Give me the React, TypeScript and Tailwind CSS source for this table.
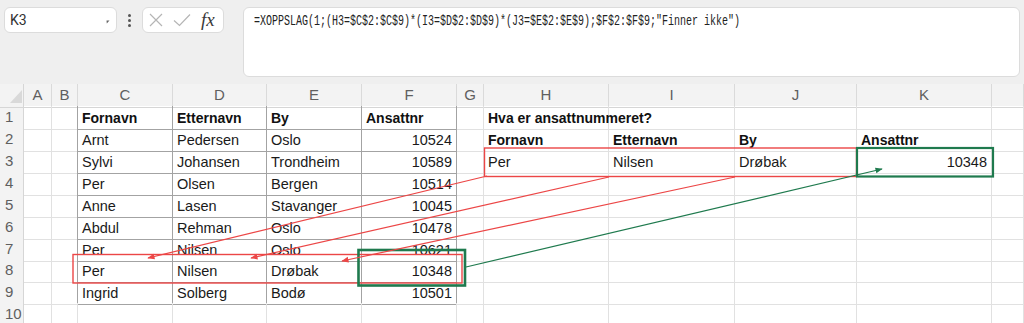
import React from "react";

type Cell = { t: string; b?: boolean; r?: boolean };

const COLS = ["A", "B", "C", "D", "E", "F", "G", "H", "I", "J", "K", ""];

// row data: index 0 = column A ... index 10 = column K
const ROWS: (Cell | null)[][] = [
  [null, null, { t: "Fornavn", b: true }, { t: "Etternavn", b: true }, { t: "By", b: true }, { t: "Ansattnr", b: true }, null, { t: "Hva er ansattnummeret?", b: true }],
  [null, null, { t: "Arnt" }, { t: "Pedersen" }, { t: "Oslo" }, { t: "10524", r: true }, null, { t: "Fornavn", b: true }, { t: "Etternavn", b: true }, { t: "By", b: true }, { t: "Ansattnr", b: true }],
  [null, null, { t: "Sylvi" }, { t: "Johansen" }, { t: "Trondheim" }, { t: "10589", r: true }, null, { t: "Per" }, { t: "Nilsen" }, { t: "Drøbak" }, { t: "10348", r: true }],
  [null, null, { t: "Per" }, { t: "Olsen" }, { t: "Bergen" }, { t: "10514", r: true }],
  [null, null, { t: "Anne" }, { t: "Lasen" }, { t: "Stavanger" }, { t: "10045", r: true }],
  [null, null, { t: "Abdul" }, { t: "Rehman" }, { t: "Oslo" }, { t: "10478", r: true }],
  [null, null, { t: "Per" }, { t: "Nilsen" }, { t: "Oslo" }, { t: "10621", r: true }],
  [null, null, { t: "Per" }, { t: "Nilsen" }, { t: "Drøbak" }, { t: "10348", r: true }],
  [null, null, { t: "Ingrid" }, { t: "Solberg" }, { t: "Bodø" }, { t: "10501", r: true }],
  [],
];

const ROW_H = ["h-[22px]", "h-[22px]", "h-[22px]", "h-[22px]", "h-[22px]", "h-[22px]", "h-[21px]", "h-[22px]", "h-[22px]", "h-[22px]"];

const GRID = "grid grid-cols-[24px_28px_26px_95px_94px_95px_95px_27px_125px_126px_122px_135px_1fr]";

const inTable = (row: number, col: number) => row >= 1 && row <= 9 && col >= 2 && col <= 5;

function DataCell({ cell, row, col }: { cell: Cell | null; row: number; col: number }) {
  const rightDark = row >= 1 && row <= 9 && col >= 1 && col <= 5;
  const bottomDark = inTable(row, col);
  return (
    <div
      className={[
        "relative flex items-end border-r border-b pb-[3px] whitespace-nowrap",
        rightDark ? "border-r-[#a3a3a3]" : "border-r-[#e1e1e1]",
        bottomDark ? "border-b-[#a3a3a3]" : "border-b-[#e1e1e1]",
        cell?.r ? "justify-end pr-[4px]" : "pl-[4px]",
      ].join(" ")}
    >
      {cell && (
        <span
          className={
            cell.b
              ? "font-bold text-[14px] leading-[16px] text-[#111]"
              : "text-[14.5px] leading-[16px] text-[#1a1a1a]"
          }
        >
          {cell.t}
        </span>
      )}
    </div>
  );
}

function FormulaBar() {
  return (
    <div className="h-[84px] bg-[#efefef] relative flex items-start pt-[7px] pl-[4px] gap-0">
      <div className="w-[113px] h-[26px] bg-white border border-[#dcdcdc] rounded-[6px] flex items-center pl-[5px] relative">
        <span className="text-[14px] text-[#333] font-['Roboto',sans-serif]">K3</span>
        <svg className="absolute right-[6px] top-[12px]" width="4" height="4" viewBox="0 0 4 4">
          <path d="M0.5 0.5 L3.5 0.5 L0.8 3.5 Z" fill="#666" />
        </svg>
      </div>
      <div className="w-[25px] h-[26px] flex flex-col items-center justify-center gap-[2px]">
        <span className="w-[3px] h-[3px] rounded-full bg-[#555]" />
        <span className="w-[3px] h-[3px] rounded-full bg-[#555]" />
        <span className="w-[3px] h-[3px] rounded-full bg-[#555]" />
      </div>
      <div className="w-[82px] h-[26px] bg-white border border-[#dcdcdc] rounded-[6px] flex items-center pl-[6px] gap-[10px]">
        <svg width="14" height="14" viewBox="0 0 14 14">
          <path d="M1 1 L13 13 M13 1 L1 13" stroke="#b5b5b5" strokeWidth="1.2" fill="none" />
        </svg>
        <svg width="18" height="14" viewBox="0 0 18 14">
          <path d="M1 7.5 L6.5 12.5 L17 1.5" stroke="#b5b5b5" strokeWidth="1.2" fill="none" />
        </svg>
        <span className="italic text-[19px] leading-none text-[#3a3a3a] font-['Liberation_Serif',serif] -mt-[2px]">fx</span>
      </div>
      <div className="ml-[19px] w-[777px] h-[70px] bg-white border border-[#dcdcdc] rounded-[6px] pl-[10px] pt-[3px] overflow-hidden">
        <div className="origin-left scale-x-[0.714] text-[14px] leading-[20px] text-[#222] font-['Liberation_Mono',monospace] whitespace-nowrap">
          =XOPPSLAG(1;(H3=$C$2:$C$9)*(I3=$D$2:$D$9)*(J3=$E$2:$E$9);$F$2:$F$9;"Finner ikke")
        </div>
      </div>
    </div>
  );
}

function Annotations() {
  const red = "#ec4646";
  const green = "#1f7a4e";
  return (
    <svg className="absolute left-0 top-0 pointer-events-none" width="1024" height="323" viewBox="0 0 1024 323">
      <defs>
        <marker id="headRed" viewBox="0 0 10 10" refX="9" refY="5" markerWidth="6" markerHeight="6" orient="auto">
          <path d="M0 1 L10 5 L0 9 Z" fill={red} />
        </marker>
        <marker id="headGreen" viewBox="0 0 10 10" refX="9" refY="5" markerWidth="6" markerHeight="6" orient="auto">
          <path d="M0 1 L10 5 L0 9 Z" fill={green} />
        </marker>
      </defs>
      {/* lookup criteria box and matching row box */}
      <rect x="484.5" y="148" width="372" height="28.5" fill="none" stroke={red} strokeWidth="1.4" />
      <rect x="73" y="254.5" width="389" height="28.5" fill="none" stroke={red} strokeWidth="1.4" />
      {/* result cells */}
      <rect x="358.5" y="250" width="106.5" height="35.5" fill="none" stroke={green} strokeWidth="2.6" />
      <rect x="857" y="148" width="136" height="28.5" fill="none" stroke={green} strokeWidth="2.2" />
      {/* arrows */}
      <line x1="487" y1="176" x2="148" y2="258" stroke={red} strokeWidth="1.2" markerEnd="url(#headRed)" />
      <line x1="609" y1="177" x2="251" y2="258" stroke={red} strokeWidth="1.2" markerEnd="url(#headRed)" />
      <line x1="735" y1="177" x2="342" y2="261" stroke={red} strokeWidth="1.2" markerEnd="url(#headRed)" />
      <line x1="466" y1="267" x2="882" y2="169" stroke={green} strokeWidth="1.2" markerEnd="url(#headGreen)" />
    </svg>
  );
}

export default function App() {
  return (
    <div className="relative w-[1024px] h-[323px] overflow-hidden bg-white font-['Liberation_Sans',Arial,sans-serif]">
      <FormulaBar />
      {/* column headers */}
      <div className={`${GRID} h-[22px] bg-[#f3f3f3]`}>
        <div className="relative border-r border-b border-r-[#d6d6d6] border-b-[#d6d6d6]">
          <svg className="absolute left-[10px] top-[6px]" width="12" height="13" viewBox="0 0 12 13">
            <path d="M12 0 L12 13 L0 13 Z" fill="#d9d9d9" />
          </svg>
        </div>
        {COLS.map((c, i) => (
          <div
            key={i}
            className="flex items-center justify-center border-r border-b border-r-[#dadada] border-b-[#d6d6d6] text-[15px] text-[#5f5f5f]"
          >
            {c}
          </div>
        ))}
      </div>
      {/* rows */}
      {ROWS.map((cells, r) => (
        <div key={r} className={`${GRID} ${ROW_H[r]}`}>
          <div className="flex items-center pl-[5px] bg-[#f3f3f3] border-r border-b border-r-[#d6d6d6] border-b-[#e1e1e1] text-[15px] text-[#5f5f5f]">
            {r + 1}
          </div>
          {COLS.map((_, c) => (
            <DataCell key={c} cell={cells[c] ?? null} row={r + 1} col={c} />
          ))}
        </div>
      ))}
      <Annotations />
    </div>
  );
}
